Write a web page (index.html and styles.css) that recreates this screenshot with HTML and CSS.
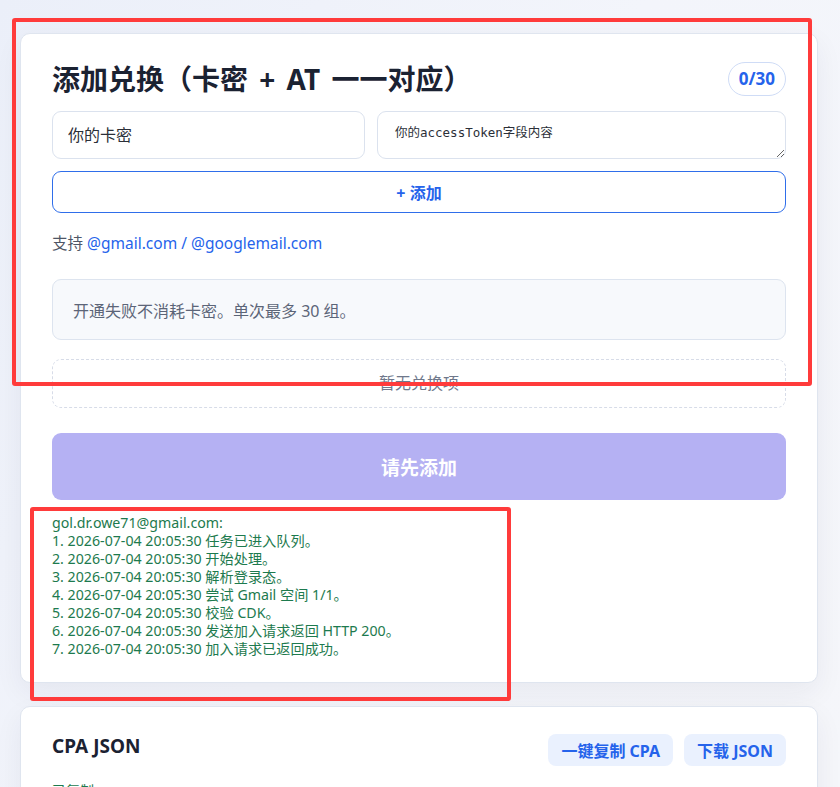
FILE: index.html
```html
<!DOCTYPE html>
<html>
<head>
  <title>添加兑换</title>
  <link rel="stylesheet" href="styles.css">
</head>
<body>
  <div class="page">
    <div class="card">
      <div class="card-head">
        <h2>添加兑换（卡密 + AT 一一对应）</h2>
        <span class="count">0/30</span>
      </div>
      <div class="inputs">
        <input type="text" class="cdk" placeholder="你的卡密">
        <textarea class="token" placeholder="你的accessToken字段内容"></textarea>
      </div>
      <button class="add-btn">+ 添加</button>
      <p class="support">支持 <span class="link">@gmail.com / @googlemail.com</span></p>
      <div class="notice">开通失败不消耗卡密。单次最多 30 组。</div>
      <div class="empty">暂无兑换项</div>
      <button class="submit-btn" disabled>请先添加</button>
      <div class="log">gol.dr.owe71@gmail.com:
1. 2026-07-04 20:05:30 任务已进入队列。
2. 2026-07-04 20:05:30 开始处理。
3. 2026-07-04 20:05:30 解析登录态。
4. 2026-07-04 20:05:30 尝试 Gmail 空间 1/1。
5. 2026-07-04 20:05:30 校验 CDK。
6. 2026-07-04 20:05:30 发送加入请求返回 HTTP 200。
7. 2026-07-04 20:05:30 加入请求已返回成功。</div>
    </div>

    <div class="card card-json">
      <div class="card-head top">
        <h3>CPA JSON</h3>
        <div class="actions">
          <button class="soft-btn">一键复制 CPA</button>
          <button class="soft-btn">下载 JSON</button>
        </div>
      </div>
      <p class="copied">已复制</p>
    </div>
  </div>

  <div class="mark mark-top"></div>
  <div class="mark mark-log"></div>
</body>
</html>
```

FILE: styles.css
```css
body {
  margin: 0;
  font-family: "Noto Sans", "Noto Sans CJK SC", sans-serif;
  background: linear-gradient(120deg, #ebeff9 0%, #f3f5fb 50%, #f5f6fa 100%);
  color: #1b2232;
  height: 787px;
  overflow: hidden;
}
.page {
  padding: 33px 22px 0 20px;
  display: flex;
  flex-direction: column;
  gap: 23px;
}
.card {
  background-color: #fff;
  border: 1px solid #dfe5ef;
  border-radius: 10px;
  padding: 27px 31px 24px;
  box-shadow: 0 10px 28px rgba(30, 41, 70, 0.06);
}
.card-head {
  display: flex;
  justify-content: space-between;
  align-items: center;
}
.card-head.top {
  align-items: flex-start;
}
h2 {
  margin: 0;
  font-size: 28px;
  font-weight: 700;
  line-height: 36px;
  word-spacing: 4px;
}
.count {
  border: 1px solid #cfdcf6;
  border-radius: 17px;
  padding: 0 10px;
  height: 32px;
  line-height: 32px;
  color: #2563eb;
  font-weight: 700;
  font-size: 17px;
}
.inputs {
  display: flex;
  gap: 12px;
  margin-top: 14px;
}
.cdk, .token {
  box-sizing: border-box;
  height: 48px;
  border: 1px solid #dbe2ee;
  border-radius: 9px;
  background: #fff;
}
.cdk {
  width: 313px;
  flex: none;
  padding: 0 15px;
  font-family: inherit;
  font-size: 16px;
}
.cdk::placeholder {
  color: #2b2f38;
}
.token {
  flex: 1;
  padding: 10px 17px;
  font-family: "DejaVu Sans Mono", "Noto Sans CJK SC", monospace;
  font-size: 12.5px;
  resize: vertical;
}
.token::placeholder {
  color: #2b2f38;
}
.add-btn {
  display: block;
  width: 100%;
  margin-top: 12px;
  height: 42px;
  border: 1px solid #2f6eea;
  border-radius: 9px;
  background: #fff;
  color: #2563eb;
  font-family: inherit;
  font-size: 16px;
  font-weight: 700;
}
.support {
  margin: 20px 0 0;
  font-size: 15.5px;
  line-height: 20px;
  color: #4f5666;
}
.link {
  color: #2563eb;
}
.notice {
  margin-top: 26px;
  height: 61px;
  box-sizing: border-box;
  padding: 0 20px;
  display: flex;
  align-items: center;
  background-color: #f7f9fc;
  border: 1px solid #dde4ef;
  border-radius: 9px;
  color: #5c6578;
  font-size: 16px;
}
.empty {
  margin-top: 19px;
  height: 49px;
  box-sizing: border-box;
  border: 1px dashed #d7dce8;
  border-radius: 9px;
  display: flex;
  align-items: center;
  justify-content: center;
  color: #6f788b;
  font-size: 16px;
  padding-bottom: 3px;
}
.submit-btn {
  display: block;
  width: 100%;
  margin-top: 25px;
  height: 67px;
  border: none;
  border-radius: 9px;
  background-color: #b5b1f3;
  color: #fff;
  font-family: inherit;
  font-size: 19px;
  font-weight: 700;
}
.log {
  margin-top: 14px;
  white-space: pre;
  color: #1d7a4e;
  font-size: 14.2px;
  line-height: 18px;
  min-height: 144px;
}
h3 {
  margin: 0;
  font-size: 19px;
  font-weight: 700;
  line-height: 24px;
}
.actions {
  display: flex;
  gap: 11px;
}
.soft-btn {
  height: 32px;
  padding: 0 13px;
  border: none;
  border-radius: 8px;
  background-color: #eaf1fe;
  color: #2563eb;
  font-family: inherit;
  font-size: 16px;
  font-weight: 700;
}
.copied {
  margin: 14px 0 0;
  color: #1d7a4e;
  font-size: 14px;
}
.mark {
  position: absolute;
  border: 4px solid #ff3b3b;
  border-radius: 3px;
  box-sizing: border-box;
}
.mark-top {
  left: 12px;
  top: 18px;
  width: 800px;
  height: 368px;
}
.mark-log {
  left: 30px;
  top: 507px;
  width: 481px;
  height: 194px;
}
```
